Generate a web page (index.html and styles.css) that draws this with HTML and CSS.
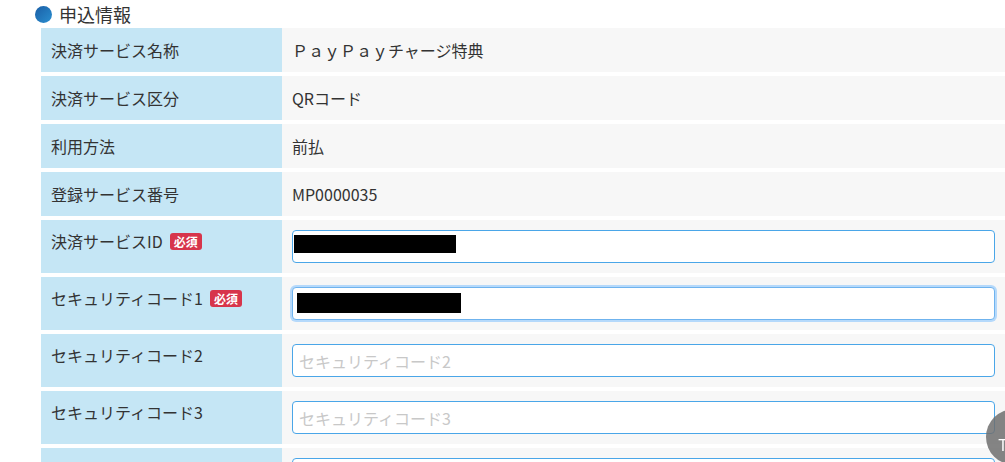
FILE: index.html
```html
<!DOCTYPE html>
<html lang="ja">
<head>
<meta charset="utf-8">
<title>申込情報</title>
<link rel="stylesheet" href="styles.css">
</head>
<body>
<section class="section">
  <h2 class="heading"><span class="dot"></span>申込情報</h2>
  <div class="form">
    <div class="row">
      <div class="label">決済サービス名称</div>
      <div class="value">ＰａｙＰａｙチャージ特典</div>
    </div>
    <div class="row">
      <div class="label">決済サービス区分</div>
      <div class="value">QRコード</div>
    </div>
    <div class="row">
      <div class="label">利用方法</div>
      <div class="value">前払</div>
    </div>
    <div class="row">
      <div class="label">登録サービス番号</div>
      <div class="value">MP0000035</div>
    </div>
    <div class="row row-input">
      <div class="label">決済サービスID<span class="badge">必須</span></div>
      <div class="value">
        <div class="field">
          <input class="input" type="text" aria-label="決済サービスID">
          <span class="redact redact-1"></span>
        </div>
      </div>
    </div>
    <div class="row row-input">
      <div class="label">セキュリティコード1<span class="badge">必須</span></div>
      <div class="value">
        <div class="field">
          <input class="input input-focus" type="text" aria-label="セキュリティコード1">
          <span class="redact redact-2"></span>
        </div>
      </div>
    </div>
    <div class="row row-input">
      <div class="label">セキュリティコード2</div>
      <div class="value">
        <div class="field"><input class="input" type="text" placeholder="セキュリティコード2"></div>
      </div>
    </div>
    <div class="row row-input">
      <div class="label">セキュリティコード3</div>
      <div class="value">
        <div class="field"><input class="input" type="text" placeholder="セキュリティコード3"></div>
      </div>
    </div>
    <div class="row row-input">
      <div class="label">セキュリティコード4</div>
      <div class="value">
        <div class="field"><input class="input" type="text" placeholder="セキュリティコード4"></div>
      </div>
    </div>
  </div>
</section>
<a class="to-top" href="#"><span class="chev"></span><span class="top-text">TOP</span></a>
</body>
</html>
```
FILE: styles.css
```css
html, body {
  margin: 0;
  padding: 0;
  background: #ffffff;
  overflow: hidden;
}
body {
  font-family: "Noto Sans CJK JP", "Noto Sans", sans-serif;
  font-size: 16px;
  color: #333333;
  height: 462px;
}
.section {
  padding: 0;
}
.heading {
  display: flex;
  align-items: center;
  gap: 7px;
  margin: 0;
  padding: 0 0 0 35px;
  height: 28px;
  font-size: 18px;
  font-weight: normal;
  color: #333333;
  line-height: 28px;
}
.dot {
  width: 17px;
  height: 17px;
  border-radius: 50%;
  background: linear-gradient(135deg, #1a5ea6 0%, #2a8fd0 100%);
  margin-top: 1px;
}
.form {
  margin-left: 41px;
  display: flex;
  flex-direction: column;
  gap: 4px;
}
.row {
  display: flex;
}
.label {
  width: 241px;
  flex: none;
  background: #c5e6f5;
  padding: 10px 10px;
  line-height: 24px;
  box-sizing: border-box;
  display: flex;
  align-items: flex-start;
}
.value {
  flex: 1;
  background: #f7f7f7;
  padding: 10px 10px;
  line-height: 24px;
  letter-spacing: 0;
}
.row-input .label {
  padding-top: 9px;
}
.badge {
  display: inline-block;
  margin: 4px 0 0 7px;
  background: #d7354b;
  color: #ffffff;
  font-size: 12px;
  font-weight: bold;
  line-height: 17px;
  height: 17px;
  padding: 0 4px;
  border-radius: 3px;
}
.field {
  position: relative;
}
.input {
  display: block;
  width: 100%;
  height: 33px;
  box-sizing: border-box;
  border: 1px solid #4aa6e8;
  border-radius: 4px;
  background: #ffffff;
  padding: 0 6px;
  font-family: "Noto Sans CJK JP", "Noto Sans", sans-serif;
  font-size: 16px;
  color: #333333;
  outline: none;
}
.input::placeholder {
  color: #c8c8c8;
}
.input-focus {
  border-color: #6fb3ee;
  box-shadow: 0 0 0 2px #b5d9fb;
}
.redact {
  position: absolute;
  background: #000000;
}
.redact-1 {
  left: 2px;
  top: 5px;
  width: 162px;
  height: 18px;
}
.redact-2 {
  left: 5px;
  top: 6px;
  width: 164px;
  height: 20px;
}
.to-top {
  position: fixed;
  left: 986px;
  top: 409px;
  width: 56px;
  height: 56px;
  border-radius: 50%;
  background: rgba(110, 110, 110, 0.85);
  color: #ffffff;
  text-decoration: none;
  display: flex;
  flex-direction: column;
  align-items: center;
  justify-content: center;
  font-family: "Noto Sans", sans-serif;
}
.chev {
  width: 8px;
  height: 8px;
  border-left: 2px solid #ffffff;
  border-top: 2px solid #ffffff;
  transform: rotate(45deg);
  margin-top: 6px;
}
.top-text {
  font-size: 16px;
  line-height: 16px;
  margin-top: 0;
}
```
